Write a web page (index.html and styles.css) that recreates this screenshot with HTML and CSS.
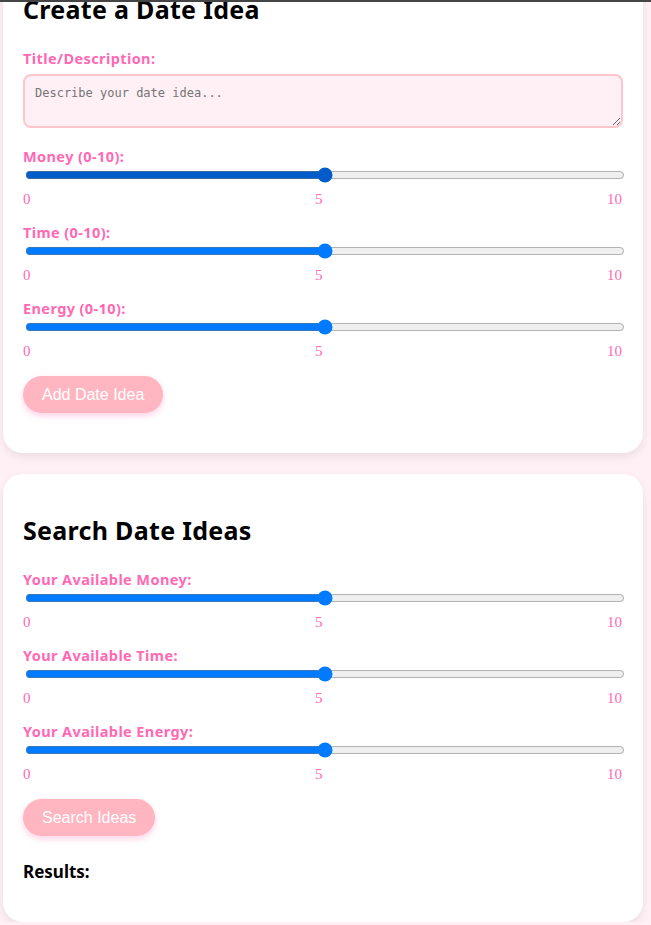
FILE: index.html
```html
<!DOCTYPE html>
<html lang="en">
<head>
<meta charset="utf-8">
<title>Date Ideas</title>
<link rel="stylesheet" href="styles.css">
</head>
<body>
<div class="topline"></div>
<main class="page">
  <section class="card">
    <h2>Create a Date Idea</h2>
    <div class="field field-text">
      <label class="lbl lbl-text">Title/Description:</label>
      <textarea class="desc" placeholder="Describe your date idea..."></textarea>
    </div>
    <div class="field">
      <label class="lbl">Money (0-10):</label>
      <input type="range" class="range range-active" min="0" max="10" value="5">
      <div class="scale"><span>0</span><span>5</span><span>10</span></div>
    </div>
    <div class="field">
      <label class="lbl">Time (0-10):</label>
      <input type="range" class="range" min="0" max="10" value="5">
      <div class="scale"><span>0</span><span>5</span><span>10</span></div>
    </div>
    <div class="field">
      <label class="lbl">Energy (0-10):</label>
      <input type="range" class="range" min="0" max="10" value="5">
      <div class="scale"><span>0</span><span>5</span><span>10</span></div>
    </div>
    <button class="btn">Add Date Idea</button>
    <div class="spacer"></div>
  </section>

  <section class="card">
    <h2>Search Date Ideas</h2>
    <div class="field">
      <label class="lbl">Your Available Money:</label>
      <input type="range" class="range" min="0" max="10" value="5">
      <div class="scale"><span>0</span><span>5</span><span>10</span></div>
    </div>
    <div class="field">
      <label class="lbl">Your Available Time:</label>
      <input type="range" class="range" min="0" max="10" value="5">
      <div class="scale"><span>0</span><span>5</span><span>10</span></div>
    </div>
    <div class="field">
      <label class="lbl">Your Available Energy:</label>
      <input type="range" class="range" min="0" max="10" value="5">
      <div class="scale"><span>0</span><span>5</span><span>10</span></div>
    </div>
    <button class="btn">Search Ideas</button>
    <h3 class="results">Results:</h3>
  </section>
</main>
</body>
</html>
```

FILE: styles.css
```css
html, body {
  margin: 0;
  padding: 0;
  background: #fff0f5;
}
body {
  font-family: "Comic Sans MS", "Noto Sans", sans-serif;
  overflow: hidden;
}
.topline {
  position: fixed;
  top: 0;
  left: 0;
  right: 0;
  height: 2px;
  background: #454545;
  z-index: 10;
}
.page {
  display: flex;
  flex-direction: column;
  gap: 21px;
  width: 640px;
  margin: -47px 0 0 3px;
}
.card {
  background: #ffffff;
  border-radius: 20px;
  padding: 20px;
  box-shadow: 0 4px 10px rgba(0, 0, 0, 0.08);
}
h2 {
  font-size: 25px;
  font-weight: 700;
  line-height: 33px;
  margin: 20px 0 22px;
  color: #000;
  letter-spacing: 0.3px;
}
.field {
  margin-bottom: 14px;
}
.field-text {
  margin-bottom: 18px;
}
.lbl {
  display: block;
  color: #ff69b4;
  font-weight: 700;
  font-size: 14.5px;
  letter-spacing: 0.4px;
  line-height: 20px;
  margin-bottom: 1px;
}
.lbl-text {
  margin-bottom: 6px;
}
.desc {
  display: block;
  box-sizing: border-box;
  width: 100%;
  height: 54px;
  padding: 10px;
  border: 2px solid #ffc5cc;
  border-radius: 8px;
  background: #fff0f5;
  font-family: "DejaVu Sans Mono", monospace;
  font-size: 12px;
  margin: 0;
}
.desc::placeholder {
  color: #757575;
}
.range {
  display: block;
  width: 100%;
  margin: 0 0 0 2px;
  height: 16px;
  accent-color: #007bff;
}
.range-active {
  accent-color: #005cc8;
}
.scale {
  display: flex;
  justify-content: space-between;
  font-family: "Liberation Serif", serif;
  font-size: 15px;
  line-height: 18px;
  color: #ff69b4;
  margin-top: 7px;
  padding: 0 1px 0 0;
}
.btn {
  display: block;
  background: #ffb6c1;
  color: #ffffff;
  border: none;
  border-radius: 20px;
  padding: 10px 19px;
  font-family: "Liberation Sans", Arial, sans-serif;
  font-size: 16px;
  line-height: 17px;
  margin-top: 16px;
  box-shadow: 0 3px 6px rgba(255, 105, 180, 0.3);
}
.spacer {
  height: 20px;
}
.results {
  font-size: 17px;
  font-weight: 700;
  line-height: 24px;
  margin: 24px 0 18px;
}
```
